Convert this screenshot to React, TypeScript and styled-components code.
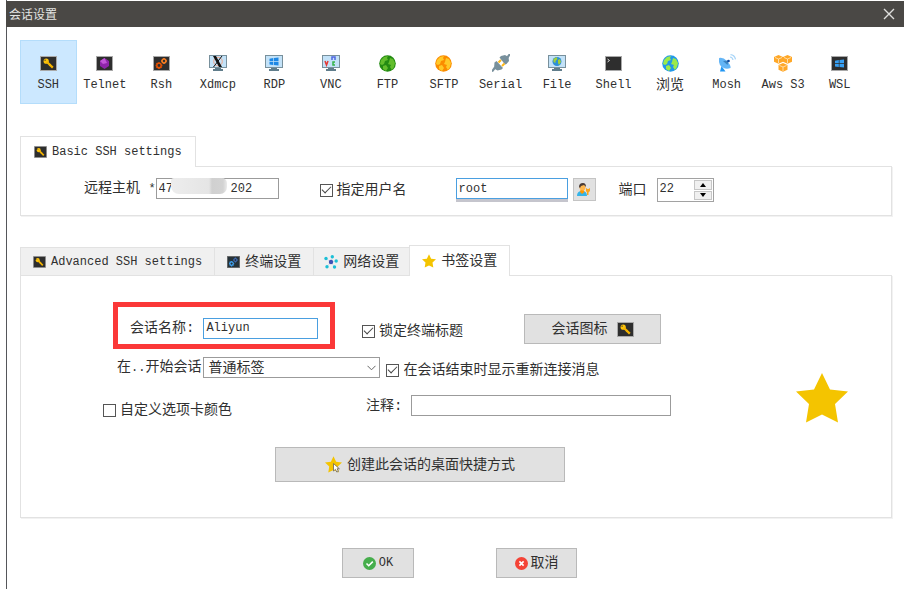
import React from 'react';
import styled, { createGlobalStyle, css } from 'styled-components';

const GlobalStyle = createGlobalStyle`
  * { box-sizing: border-box; }
  body { margin: 0; background: #fff; }
  button, input, select { font: inherit; color: inherit; margin: 0; }
`;

const cjk = '"Liberation Mono", "Noto Sans CJK SC", monospace';

const Window = styled.div`
  min-height: 100vh;
  margin-left: 6px;
  padding-top: 1px;
  display: flex;
  flex-direction: column;
  border-left: 1px solid #55565a;
  font-family: ${cjk};
  font-size: 14px;
  line-height: 20px;
  color: #303030;
`;

const TitleBar = styled.header`
  height: 26px;
  margin-left: -1px;
  padding: 0 9px 0 3px;
  display: flex;
  align-items: center;
  justify-content: space-between;
  background: #4a4845;
  color: #e4e4e2;
`;

const Title = styled.h1`
  margin: 0;
  font: 400 12px/20px "Noto Sans CJK SC", sans-serif;
`;

const CloseButton = styled.button`
  display: flex;
  padding: 0;
  border: 0;
  background: none;
`;

const Toolbar = styled.nav`
  display: flex;
  height: 64px;
  margin: 13px 36px 0 13px;
`;

const ToolButton = styled.button<{ $active?: boolean }>`
  flex: 1 1 0;
  min-width: 0;
  padding: 10px 0 0;
  display: flex;
  flex-direction: column;
  align-items: center;
  justify-content: flex-start;
  border: 1px solid ${p => (p.$active ? '#b4ddfb' : 'transparent')};
  background: ${p => (p.$active ? '#cce8ff' : 'none')};
  white-space: nowrap;
`;

const Latin = styled.span`
  font-size: 12px;
`;

const Section = styled.section<{ $gap: number }>`
  margin: ${p => p.$gap}px 12px 0 13px;
`;

const TabList = styled.div`
  display: flex;
  align-items: flex-end;
  height: 31px;
`;

const Tab = styled.button<{ $selected?: boolean; $pad?: number }>`
  height: 28px;
  padding: 0 ${p => p.$pad ?? 12}px;
  display: flex;
  align-items: center;
  gap: 5px;
  border: 1px solid #e2e2e2;
  border-bottom: 0;
  border-right: 0;
  background: #f0f0f0;
  white-space: nowrap;
  ${p => p.$selected && css`
    height: 31px;
    margin-bottom: -1px;
    border-right: 1px solid #e2e2e2;
    background: #fff;
    position: relative;
  `}
`;

const Panel = styled.div<{ $row?: boolean }>`
  display: flex;
  border: 1px solid #e2e2e2;
  box-shadow: 1px 1px 0 #f2f2f2;
  ${p => p.$row ? css`
    height: 50px;
    padding: 11px 0 0 63px;
    align-items: flex-start;
  ` : css`
    justify-content: space-between;
    height: 243px;
  `}
`;

const Field = styled.label<{ $gap?: number }>`
  display: flex;
  align-items: center;
  gap: ${p => p.$gap ?? 4}px;
  white-space: nowrap;
`;

const TextBox = styled.input<{ $w: number; $focus?: boolean }>`
  width: ${p => p.$w}px;
  height: 21px;
  padding: 0 2px;
  border: 1px solid ${p => (p.$focus ? '#4a9fe0' : '#9b9b9b')};
  border-radius: 0;
  background: #fff;
  outline: none;
  font-size: 12px;
`;

const HostBox = styled.div`
  position: relative;
  display: flex;
`;

const Mask = styled.span`
  position: absolute;
  left: 15px;
  top: 0;
  width: 56px;
  height: 16px;
  border-radius: 3px 5px 7px 8px;
  background: linear-gradient(90deg, #ededed, #e5e5e5 38px, #d0d0d0 41px, #d3d3d3 52px, #ebebeb);
`;

const Check = styled.input`
  appearance: none;
  width: 13px;
  height: 13px;
  border: 1px solid #555;
  background: #fff;
  display: grid;
  place-items: center;
  &:checked::after {
    content: "";
    width: 8px;
    height: 4px;
    margin-top: -3px;
    border-left: 1px solid #444;
    border-bottom: 1px solid #444;
    transform: rotate(-45deg);
  }
`;

const UserCombo = styled.div`
  margin-left: 49px;
  border-bottom: 3px solid #c5c5cd;
  display: flex;
`;

const IconButton = styled.button`
  width: 23px;
  height: 23px;
  margin-left: 5px;
  padding: 0;
  display: grid;
  place-items: center;
  border: 1px solid #c4c4c4;
  background: #e1e1e1;
`;

const Spinner = styled.span`
  display: flex;
  width: 57px;
  height: 24px;
  padding: 1px;
  border: 1px solid #a2a2a2;
`;

const PortInput = styled.input`
  flex: 1;
  min-width: 0;
  height: 18px;
  padding: 0 1px;
  border: 0;
  outline: 0;
  background: none;
  font-size: 12px;
`;

const Steps = styled.span`
  display: flex;
  flex-direction: column;
  gap: 1px;
`;

const Step = styled.button`
  width: 18px;
  flex: 1;
  padding: 0;
  display: grid;
  place-items: center;
  border: 1px solid #c6c6c6;
  background: #f0f0f0;
`;

const Form = styled.div`
  display: flex;
  flex-direction: column;
  align-items: flex-start;
  padding: 26px 0 0 82px;
`;

const Line = styled.div<{ $top?: number; $left?: number }>`
  display: flex;
  align-items: flex-start;
  margin: ${p => p.$top ?? 0}px 0 0 ${p => p.$left ?? 0}px;
`;

const Highlight = styled.div`
  width: 222px;
  height: 47px;
  padding: 5px 0 0 12px;
  display: flex;
  align-items: center;
  border: 5px solid #fb3838;
`;

const Spaced = styled.div<{ $left: number; $top?: number }>`
  margin: ${p => p.$top ?? 0}px 0 0 ${p => p.$left}px;
`;

const SelectWrap = styled.span`
  position: relative;
  display: flex;
  align-items: center;
  svg { position: absolute; right: 4px; pointer-events: none; }
`;

const Select = styled.select`
  appearance: none;
  width: 177px;
  height: 21px;
  padding: 0 20px 0 4px;
  border: 1px solid #9b9b9b;
  border-radius: 0;
  background: #fff;
  line-height: 18px;
`;

const PushButton = styled.button<{ $w: number; $h: number; $gap?: number }>`
  width: ${p => p.$w}px;
  height: ${p => p.$h}px;
  padding: 0;
  display: flex;
  align-items: center;
  justify-content: center;
  gap: ${p => p.$gap ?? 5}px;
  border: 1px solid #b9b9b9;
  background: #e1e1e1;
  white-space: nowrap;
`;

const BigStar = styled.div`
  margin: 96px 43px 0 0;
`;

const Footer = styled.footer`
  display: flex;
  gap: 82px;
  margin: 30px 0 11px 335px;
`;

const KeyIcon = ({ w = 17 }: { w?: number }) => (
  <svg width={w} height={w === 17 ? 15 : 12} viewBox="0 0 17 15" preserveAspectRatio="none">
    <path d="M0 0h17v15H0z" fill="#a9a9a9" /><path d="M1 1h15v13H1z" fill="#2e2e2e" />
    <circle cx="6.2" cy="5.2" r="2.6" fill="#fcc20a" /><circle cx="5.1" cy="4.2" r=".6" fill="#2e2e2e" />
    <path d="M7 6l5.800 5.600" stroke="#f5b400" strokeWidth="2.200" /><path d="M9.200 9.600l1.400-1.400" stroke="#f5b400" strokeWidth="1.500" />
  </svg>
);
const Screen = ({ children }: { children?: React.ReactNode }) => (
  <svg width="17" height="15" viewBox="0 0 17 15">
    <path d="M0 0h17v15H0z" fill="#a9a9a9" /><path d="M1 1h15v13H1z" fill="#2e2e2e" />{children}
  </svg>
);
const Monitor = ({ children }: { children?: React.ReactNode }) => (
  <svg width="18" height="16" viewBox="0 0 18 16">
    <path d="M0 0h18v13H0z" fill="#78909c" /><path d="M1 1h16v11H1z" fill="#c3e2f8" />
    <path d="M6 13h6v1h2v2H4v-2h2z" fill="#607d8b" />{children}
  </svg>
);
const Globe = ({ sea, land }: { sea: string; land: string }) => (
  <svg width="17" height="17" viewBox="0 0 17 17">
    <circle cx="8.500" cy="8.500" r="8.300" fill={sea} />
    <path d="M2 5l3-3 4-1-1 2 1 2-3 1-1 3-2 1-2-1zM10 7l1-4 3 1 2 4-1 4-2 3-2-3 1-2-3-1zM4 11l3-1 2 3-2 3-3-2z" fill={land} />
  </svg>
);
const WinLogo = ({ x, y, c }: { x: number; y: number; c: string }) => (
  <path transform={`translate(${x} ${y})`} d="M0 1.200l3.800-.6v3.100H0zM4.500.5L9 0v3.700H4.500zM0 4.400h3.800v3.100L0 6.900zM4.500 4.400H9V8l-4.500-.5z" fill={c} />
);
const Star = ({ size, cursor }: { size: number; cursor?: boolean }) => (
  <svg width={size} height={size} viewBox="0 0 52 50">
    <path d="M26 0l8 16.500 18 2-13 12.500 3 18.500-16-8-16 8 3-18.500L0 18.500l18-2z" fill="#f4c400" />
    {cursor && <path d="M26 22v23l6-5 4 8 5-2-4-8h7z" fill="#fff" stroke="#6b6559" strokeWidth="2.500" />}
  </svg>
);
const Gears = ({ a, b }: { a: string; b: string }) => (
  <g fill="none" strokeWidth="1.500">
    <circle cx="6" cy="9.500" r="2.200" stroke={a} /><circle cx="11" cy="5" r="1.900" stroke={b} />
    <path d="M6 6.200v1M6 12v1M2.600 9.500h1M8.400 9.500h1M3.600 7.100l.7.7M3.600 11.900l.7-.7M8.400 11.900l-.7-.7" stroke={a} />
    <path d="M11 2v1M11 7v1M8 5h1M13 5h1" stroke={b} />
  </g>
);
const GearScreen = () => (
  <svg width="13" height="12" viewBox="0 0 17 15" preserveAspectRatio="none">
    <path d="M0 0h17v15H0z" fill="#777" /><path d="M1 1h15v13H1z" fill="#263238" /><Gears a="#42a5f5" b="#3f6bb5" />
  </svg>
);
const Network = () => (
  <svg width="14" height="14" viewBox="0 0 14 14">
    <path d="M7 7L2 3.500M7 7l1.500-5M7 7l5-1M7 7l3.500 5M7 7l-4 4.500" stroke="#c8d8e8" strokeWidth=".8" />
    <circle cx="7" cy="7" r="2.200" fill="#3f51b5" />
    <g fill="#1bbfd6"><circle cx="2" cy="3.500" r="1.700" /><circle cx="8.300" cy="1.800" r="1.700" /><circle cx="12.200" cy="6" r="1.700" /><circle cx="10.500" cy="12" r="1.700" /><circle cx="3" cy="11.800" r="1.700" /></g>
  </svg>
);
const Serial = () => (
  <svg width="18" height="18" viewBox="0 0 18 18">
    <path d="M0 17.500l3-4M18 0l-3 4" stroke="#78909c" strokeWidth="2.200" />
    <path d="M2.500 8.500l2-1.500 6.500 7-1.500 1.500-4 1-3.500-2z" fill="#78909c" />
    <path d="M7.500 3.500L9 2l4-1 3.500 2 .5 4-2.500 3-1.500.500z" fill="#78909c" />
    <path d="M6.500 8.500l2.500-2.500M10 12l2.500-2.500" stroke="#ffb917" strokeWidth="2" />
  </svg>
);
const Dish = () => (
  <svg width="18" height="18" viewBox="0 0 18 18">
    <path d="M2 17.500L3.500 12l4 5.500z" fill="#2196f3" />
    <path d="M1 4q-1 9 6 10.500 3 .5 5.500-.5z" fill="#64b5f6" />
    <path d="M1 4q4-1 8 3t3.500 7q-6-1-8.500-4T1 4z" fill="#64b5f6" />
    <path d="M5 7l5.500-.5-1 4.500z" fill="#3b83c0" /><circle cx="10.500" cy="7" r="1.300" fill="#0d47a1" />
    <path d="M12 3q2.500 0 3 3M12.500 .7q4 .3 5 4.600" fill="none" stroke="#a8d5f8" strokeWidth="1.200" />
  </svg>
);
const Aws = () => (
  <svg width="18" height="17" viewBox="0 0 18 17">
    {[[0, 0], [9, 0], [4.5, 8]].map(([x, y]) => (
      <g key={`${x}-${y}`} transform={`translate(${x} ${y})`}>
        <path d="M0 2l4.500-2L9 2v4.800L4.500 8.800 0 6.800z" fill="#ffa726" />
        <path d="M1 2.500L4.500 4 8 2.500M4.500 4v4" fill="none" stroke="#ffe9c4" strokeWidth=".8" />
      </g>
    ))}
  </svg>
);
const UserKey = () => (
  <svg width="14" height="13" viewBox="0 0 14 13">
    <path d="M0 13q0-5 5-5t5 5z" fill="#35b4e8" /><path d="M3.500 7h3l1 2L5 11 3 9z" fill="#ff9800" />
    <circle cx="5.500" cy="4.500" r="3" fill="#ffb74d" /><path d="M2 4q0-4 4-4 3 0 3 4l-2-2-3 1-1 2z" fill="#4a3b36" />
    <path d="M9 5l1.500 1h1L13 5v3l-1.500 1.500V12H10V9.500L9 8z" fill="#fba51b" />
  </svg>
);
const Disc = ({ ok }: { ok?: boolean }) => (
  <svg width="13" height="13" viewBox="0 0 13 13">
    <circle cx="6.500" cy="6.500" r="6.500" fill={ok ? '#46ae4c' : '#f44336'} />
    <path d={ok ? 'M3.500 6.500l2.200 2.200L9.800 4.600' : 'M4.400 4.400l4.200 4.200M8.600 4.400L4.400 8.600'} fill="none" stroke="#fff" strokeWidth="1.600" />
  </svg>
);

const tools: { name: string; icon: React.ReactNode }[] = [
  { name: 'SSH', icon: <KeyIcon /> },
  { name: 'Telnet', icon: <Screen><path d="M8.500 2l4.500 3v5l-4.500 3L4 10V5z" fill="#8e24aa" /><path d="M8.500 2L4 5l3 3 4-1z" fill="#c254d8" /></Screen> },
  { name: 'Rsh', icon: <Screen><Gears a="#e65100" b="#f57c22" /></Screen> },
  { name: 'Xdmcp', icon: <Monitor><circle cx="9" cy="6.500" r="4.300" fill="none" stroke="#f0a58a" /><path d="M4 1h3l6 11h-3z" fill="#111" /><path d="M13 1L4.500 12" stroke="#111" /></Monitor> },
  { name: 'RDP', icon: <Monitor><WinLogo x={4.5} y={2.5} c="#1e88e5" /></Monitor> },
  { name: 'VNC', icon: <Monitor><path d="M3 6l1.500 4L6 6" stroke="#e53935" strokeWidth="1.500" fill="none" /><path d="M10 5V2h3v3" stroke="#5267e0" strokeWidth="1.500" fill="none" /><path d="M13 7h-2v3h2" stroke="#35b34a" strokeWidth="1.500" fill="none" /></Monitor> },
  { name: 'FTP', icon: <Globe sea="#238b12" land="#62bd2c" /> },
  { name: 'SFTP', icon: <Globe sea="#fb8c00" land="#ffc928" /> },
  { name: 'Serial', icon: <Serial /> },
  { name: 'File', icon: <Monitor><circle cx="9" cy="6.500" r="4.500" fill="#2b8fd8" /><path d="M5.500 4l3-2 1 2-2 2v2l-2-1zM10 5l2-1 1 3-2 3-1-2z" fill="#a4d037" /></Monitor> },
  { name: 'Shell', icon: <Screen><path d="M2.500 3l2 1.500-2 1.500" fill="none" stroke="#ddd" /></Screen> },
  { name: '浏览', icon: <Globe sea="#2398e8" land="#9cea4a" /> },
  { name: 'Mosh', icon: <Dish /> },
  { name: 'Aws S3', icon: <Aws /> },
  { name: 'WSL', icon: <Screen><WinLogo x={4} y={3.5} c="#37a0f4" /></Screen> },
];

const IconSlot = styled.span`
  height: 24px;
  display: flex;
  align-items: center;
`;

export default function App() {
  return (
    <>
      <GlobalStyle />
      <Window>
        <TitleBar>
          <Title>会话设置</Title>
          <CloseButton aria-label="关闭">
            <svg width="12" height="12" viewBox="0 0 12 12"><path d="M1 1l10 10M11 1L1 11" stroke="#dededc" strokeWidth="1.400" /></svg>
          </CloseButton>
        </TitleBar>

        <Toolbar>
          {tools.map((t, i) => (
            <ToolButton key={t.name} $active={i === 0}>
              <IconSlot>{t.icon}</IconSlot>
              {/^[A-Z]/.test(t.name) ? <Latin>{t.name}</Latin> : <span>{t.name}</span>}
            </ToolButton>
          ))}
        </Toolbar>

        <Section $gap={31}>
          <TabList role="tablist">
            <Tab role="tab" aria-selected $selected $pad={13}><KeyIcon w={13} /><Latin>Basic SSH settings</Latin></Tab>
          </TabList>
          <Panel $row>
            <Field $gap={0}>
              <span>远程主机 <Latin>*</Latin></span>
              <HostBox><TextBox $w={123} defaultValue="47        202" /><Mask /></HostBox>
            </Field>
            <Spaced $left={41} $top={2}><Field><Check type="checkbox" defaultChecked />指定用户名</Field></Spaced>
            <UserCombo><TextBox $w={112} $focus defaultValue="root" aria-label="用户名" /></UserCombo>
            <IconButton aria-label="用户"><UserKey /></IconButton>
            <Spaced $left={23}>
              <Field $gap={10}>
                端口
                <Spinner>
                  <PortInput defaultValue="22" />
                  <Steps>
                    <Step aria-label="增加"><svg width="6" height="4" viewBox="0 0 6 4"><path d="M3 0l3 4H0z" /></svg></Step>
                    <Step aria-label="减少"><svg width="6" height="4" viewBox="0 0 6 4"><path d="M0 0h6L3 4z" /></svg></Step>
                  </Steps>
                </Spinner>
              </Field>
            </Spaced>
          </Panel>
        </Section>

        <Section $gap={28}>
          <TabList role="tablist">
            <Tab role="tab"><KeyIcon w={13} /><Latin>Advanced SSH settings</Latin></Tab>
            <Tab role="tab"><GearScreen />终端设置</Tab>
            <Tab role="tab" $pad={10}><Network />网络设置</Tab>
            <Tab role="tab" aria-selected $selected><Star size={14} />书签设置</Tab>
          </TabList>
          <Panel>
            <Form>
              <Line $left={10}>
                <Highlight><Field $gap={9}>会话名称:<TextBox $w={115} $focus defaultValue="Aliyun" /></Field></Highlight>
                <Spaced $left={27} $top={19}><Field><Check type="checkbox" defaultChecked />锁定终端标题</Field></Spaced>
                <Spaced $left={61} $top={12}><PushButton $w={137} $h={30} $gap={9}>会话图标<KeyIcon /></PushButton></Spaced>
              </Line>
              <Line $top={8} $left={14}>
                <Field $gap={2}>
                  <span>在<Latin>..</Latin>开始会话</span>
                  <SelectWrap>
                    <Select defaultValue="普通标签"><option>普通标签</option></Select>
                    <svg width="9" height="6" viewBox="0 0 9 6"><path d="M.5 .8l4 4 4-4" fill="none" stroke="#666" /></svg>
                  </SelectWrap>
                </Field>
                <Spaced $left={6} $top={3}><Field><Check type="checkbox" defaultChecked />在会话结束时显示重新连接消息</Field></Spaced>
              </Line>
              <Line $top={15}>
                <Spaced $left={0} $top={5}><Field><Check type="checkbox" />自定义选项卡颜色</Field></Spaced>
                <Spaced $left={134}><Field $gap={9}>注释:<TextBox $w={260} /></Field></Spaced>
              </Line>
              <Line $top={27} $left={172}>
                <PushButton $w={290} $h={35}><Star size={17} cursor />创建此会话的桌面快捷方式</PushButton>
              </Line>
            </Form>
            <BigStar><Star size={52} /></BigStar>
          </Panel>
        </Section>

        <Footer>
          <PushButton $w={72} $h={30} $gap={3}><Disc ok /><Latin>OK</Latin></PushButton>
          <PushButton $w={81} $h={30} $gap={3}><Disc />取消</PushButton>
        </Footer>
      </Window>
    </>
  );
}
